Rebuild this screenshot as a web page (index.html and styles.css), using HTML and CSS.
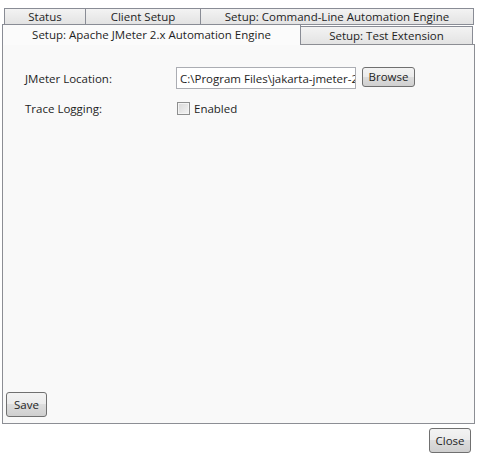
FILE: index.html
```html
<!DOCTYPE html>
<html>
<head>
<meta charset="utf-8">
<link rel="stylesheet" href="styles.css">
</head>
<body>
<div class="window">
  <div class="tabs">
    <div class="row row1">
      <div class="tab t-status">Status</div>
      <div class="tab t-client">Client Setup</div>
      <div class="tab t-cmd">Setup: Command-Line Automation Engine</div>
    </div>
    <div class="row row2">
      <div class="tab t-jmeter selected">Setup: Apache JMeter 2.x Automation Engine</div>
      <div class="tab t-ext">Setup: Test Extension</div>
    </div>
  </div>
  <div class="panel">
    <div class="form">
      <div class="field">
        <div class="label">JMeter Location:</div>
        <input class="textbox" type="text" readonly value="C:\Program Files\jakarta-jmeter-2.3.4">
        <div class="btn browse">Browse</div>
      </div>
      <div class="field field2">
        <div class="label">Trace Logging:</div>
        <div class="check"><span class="box"></span><span class="check-text">Enabled</span></div>
      </div>
    </div>
    <div class="panel-foot">
      <div class="btn save">Save</div>
    </div>
  </div>
  <div class="foot">
    <div class="btn close">Close</div>
  </div>
</div>
</body>
</html>
```
FILE: styles.css
```css
html, body {
  margin: 0;
  padding: 0;
  background: #ffffff;
}
body {
  font-family: "Open Sans", "Noto Sans", sans-serif;
  font-size: 11.5px;
  color: #1e1e1e;
  width: 478px;
  height: 458px;
  overflow: hidden;
}
.window {
  display: flex;
  flex-direction: column;
}
.tabs {
  padding-top: 8px;
}
.row {
  display: flex;
}
.row1 {
  padding-left: 4px;
  height: 17px;
}
.row2 {
  padding-left: 2px;
  margin-top: -1px;
  height: 20px;
  align-items: flex-start;
}
.tab {
  box-sizing: border-box;
  border: 1px solid #898c95;
  background: linear-gradient(#f3f3f3, #e3e3e3);
  display: flex;
  align-items: center;
  justify-content: center;
  white-space: nowrap;
  line-height: 1;
}
.row1 .tab {
  height: 17px;
  margin-right: -1px;
}
.t-status { width: 82px; }
.t-client { width: 116px; }
.t-cmd { width: 274px; }
.t-jmeter {
  width: 299px;
  height: 21px;
  position: relative;
  z-index: 2;
  margin-right: -1px;
  border-bottom: none;
  background: #fbfbfb;
  padding-bottom: 1px;
}
.t-ext {
  width: 173px;
  height: 18px;
  margin-top: 2px;
  border-bottom: none;
  padding-top: 1px;
}
.panel {
  box-sizing: border-box;
  margin-left: 2px;
  width: 473px;
  height: 380px;
  border: 1px solid #8c8e94;
  background: #f9f9f9;
  display: flex;
  flex-direction: column;
  justify-content: space-between;
}
.form {
  padding: 22px 0 0 22px;
  display: flex;
  flex-direction: column;
  gap: 12px;
}
.field {
  display: flex;
  align-items: center;
}
.label {
  width: 151px;
}
.textbox {
  box-sizing: border-box;
  width: 180px;
  height: 22px;
  margin: 0;
  border: 1px solid #abadb3;
  border-radius: 0;
  background: #ffffff;
  padding: 0 0 0 3px;
  font-family: inherit;
  font-size: inherit;
  color: inherit;
  outline: none;
}
.btn {
  box-sizing: border-box;
  border: 1px solid #707070;
  border-radius: 3px;
  background: linear-gradient(#f3f3f3 0%, #ebebeb 50%, #dddddd 50%, #cfcfcf 100%);
  display: flex;
  align-items: center;
  justify-content: center;
  line-height: 1;
}
.browse {
  width: 53px;
  height: 20px;
  margin-left: 6px;
  align-self: flex-start;
}
.check {
  display: flex;
  align-items: center;
  padding-left: 1px;
}
.box {
  box-sizing: border-box;
  width: 13px;
  height: 13px;
  border: 1px solid #8e8f8f;
  background: linear-gradient(135deg, #d8d8d8, #f4f4f4);
  box-shadow: inset 0 0 0 1px #f4f4f4;
  margin-right: 4px;
}
.panel-foot {
  padding: 0 0 6px 3px;
}
.save {
  width: 41px;
  height: 25px;
}
.foot {
  display: flex;
  justify-content: flex-end;
  padding: 4px 7px 0 0;
}
.close {
  width: 42px;
  height: 25px;
}
```
